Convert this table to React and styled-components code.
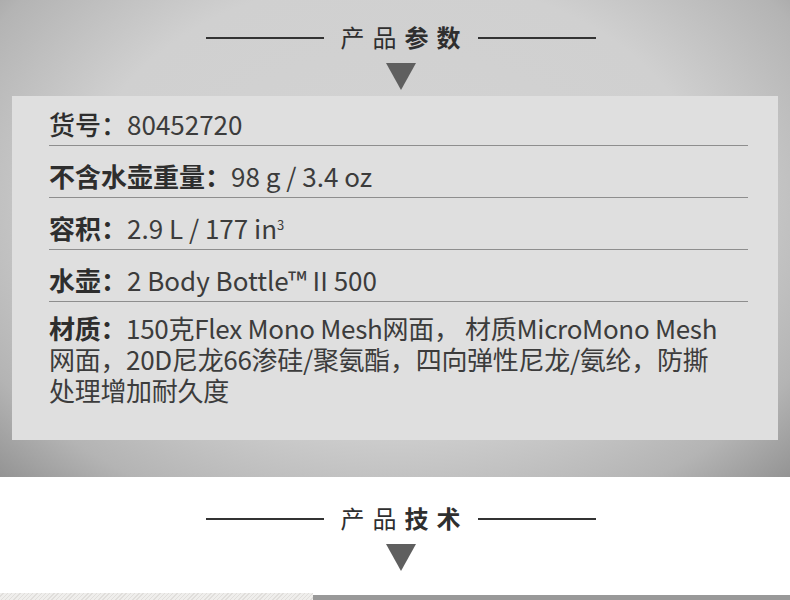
import React from 'react';
import styled, { createGlobalStyle } from 'styled-components';

const GlobalStyle = createGlobalStyle`
  body {
    margin: 0;
    font-family: "Noto Sans CJK SC", "Noto Sans", sans-serif;
    background: #fff;
  }
`;

const specs = [
  { label: '货号', value: '80452720', weight: 500 },
  { label: '不含水壶重量', value: '98 g / 3.4 oz', weight: 700 },
  { label: '容积', value: <>2.9 L / 177 in<sup>3</sup></>, weight: 700 },
  { label: '水壶', value: '2 Body Bottle™ II 500', weight: 700 },
];

const App = () => {
  return (
    <Page>
      <GlobalStyle />
      <Params>
        <Heading>
          <Rule />
          <Title>
            <span>产品</span><b>参数</b>
          </Title>
          <Rule />
        </Heading>
        <Arrow />
        <Panel>
          {specs.map((s) => (
            <Row key={s.label}>
              <Label $weight={s.weight}>{s.label}：</Label>
              <Value>{s.value}</Value>
            </Row>
          ))}
          <Material>
            <Label $weight={700}>材质：</Label>
            150克Flex Mono Mesh网面， 材质MicroMono Mesh<br />
            网面，20D尼龙66渗硅/聚氨酯，四向弹性尼龙/氨纶，防撕<br />
            处理增加耐久度
          </Material>
        </Panel>
      </Params>
      <Tech>
        <Heading>
          <Rule />
          <Title>
            <span>产品</span><b>技术</b>
          </Title>
          <Rule />
        </Heading>
        <Arrow />
      </Tech>
      <Strip>
        <Fabric />
        <Shade />
      </Strip>
    </Page>
  );
};

const Page = styled.div`
  width: 790px;
  height: 600px;
  overflow: hidden;
`;

const Params = styled.section`
  height: 477px;
  box-sizing: border-box;
  padding-top: 24px;
  display: flex;
  flex-direction: column;
  align-items: center;
  background:
    radial-gradient(ellipse 72% 85% at 50% 42%, #d3d3d3 0%, #d0d0d0 55%, #b4b4b4 82%, #8e8e8e 100%);
`;

const Heading = styled.div`
  display: flex;
  align-items: center;
  gap: 17px;
  height: 28px;
  margin-left: 11px;
`;

const Rule = styled.div`
  width: 118px;
  height: 2px;
  background: #333;
`;

const Title = styled.h2`
  margin: 0 -8px 0 0;
  font-size: 24px;
  line-height: 28px;
  color: #2f2f2f;
  letter-spacing: 8px;
  position: relative;
  top: -1px;
  span { font-weight: 400; }
  b { font-weight: 700; }
`;

const Arrow = styled.div`
  margin-top: 11px;
  margin-left: 12px;
  width: 0;
  height: 0;
  border-left: 15px solid transparent;
  border-right: 15px solid transparent;
  border-top: 27px solid #5f5f5f;
`;

const Panel = styled.div`
  margin-top: 6px;
  width: 766px;
  height: 344px;
  box-sizing: border-box;
  padding: 0 30px 0 37px;
  background: #dfdfdf;
`;

const Row = styled.div`
  height: 52px;
  box-sizing: border-box;
  display: flex;
  align-items: flex-end;
  padding-bottom: 6px;
  border-bottom: 1px solid #8e8e8e;
  font-size: 26px;
  line-height: 30px;
  color: #3c3c3c;
  &:first-child { height: 50px; }
`;

const Label = styled.span`
  font-weight: ${(p) => p.$weight};
  color: #2e2e2e;
`;

const Value = styled.span`
  font-weight: 400;
  sup {
    font-size: 13px;
    vertical-align: top;
    position: relative;
    top: -3px;
  }
`;

const Material = styled.p`
  margin: 10px 0 0;
  font-size: 26px;
  line-height: 31px;
  letter-spacing: -0.3px;
  color: #3c3c3c;
`;

const Tech = styled.section`
  height: 116px;
  box-sizing: border-box;
  padding-top: 28px;
  display: flex;
  flex-direction: column;
  align-items: center;
  background: #fff;
`;

const Strip = styled.div`
  display: flex;
  height: 7px;
`;

const Fabric = styled.div`
  width: 313px;
  background: repeating-linear-gradient(135deg, #efeeec 0 2px, #e0dedb 2px 3px);
`;

const Shade = styled.div`
  flex: 1;
  margin-top: 2px;
  background: #999;
`;

export default App;
